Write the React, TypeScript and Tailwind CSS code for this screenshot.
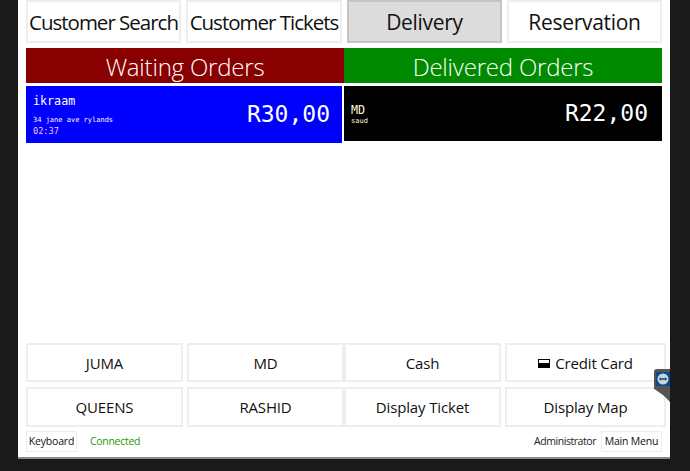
const font = "font-['Open_Sans','Noto_Sans',sans-serif]";

function Btn({ label, className = "" }: { label: React.ReactNode; className?: string }) {
  return (
    <div className={`flex items-center justify-center whitespace-nowrap border-2 border-[#eeeeee] bg-white text-[#111] ${className}`}>
      {label}
    </div>
  );
}

export default function App() {
  return (
    <div className={`h-[471px] w-[690px] overflow-hidden bg-[#1a1a1a] ${font}`}>
      <div className="relative flex h-[459px] w-[652px] ml-[18px] flex-col border-b-2 border-[#8a8a8a] bg-white px-2">
        {/* top tabs */}
        <div className="flex h-[43px] gap-[5px] text-[21px] tracking-[-0.3px]">
          <Btn label={<span className="text-[20.5px] tracking-[-1px]">Customer Search</span>} className="w-[155px] pt-[2px]" />
          <Btn label={<span className="text-[20.5px] tracking-[-1px]">Customer Tickets</span>} className="w-[156px] pt-[2px]" />
          <Btn label="Delivery" className="w-[155px] pt-[2px] !border-[#c4c4c4] !bg-[#dcdcdc]" />
          <Btn label="Reservation" className="flex-1 pt-[2px]" />
        </div>

        {/* headers */}
        <div className="mt-[5px] flex h-[35px] text-[24px] font-light tracking-[-0.2px] text-white">
          <div className="flex w-[318px] items-center justify-center bg-[#880000] pt-[2px]">Waiting Orders</div>
          <div className="flex flex-1 items-center justify-center bg-[#008a00] pt-[2px]">Delivered Orders</div>
        </div>

        {/* order cards */}
        <div className="mt-[3px] flex flex-1 items-start gap-[2px] font-['DejaVu_Sans_Mono',monospace] text-white">
          <div className="flex h-[57px] w-[316px] items-center justify-between bg-[#0000ff] pl-[7px] pr-[12px]">
            <div className="flex flex-col">
              <span className="text-[11.7px] leading-[14px]">ikraam</span>
              <span className="mt-[7px] text-[7px] leading-[10px]">34 jane ave rylands</span>
              <span className="mt-[1px] text-[8.6px] leading-[10px] text-[#ffc0e0]">02:37</span>
            </div>
            <span className="text-[23px] leading-none">R30,00</span>
          </div>
          <div className="flex h-[55px] flex-1 items-center justify-between bg-black pl-[7px] pr-[14px]">
            <div className="flex flex-col pt-[3px]">
              <span className="text-[11.7px] leading-[12px] text-[#fff8d8]">MD</span>
              <span className="text-[7px] leading-[10px] text-[#fff8d8]">saud</span>
            </div>
            <span className="text-[23px] leading-none">R22,00</span>
          </div>
        </div>

        {/* bottom buttons */}
        <div className="grid h-[84px] grid-cols-[157px_157px_157px_157px] grid-rows-[39px_40px] gap-x-[4px] gap-y-[5px] text-[15px] tracking-[-0.15px]">
          <Btn label="JUMA" className="pt-[1px]" />
          <Btn label="MD" className="pt-[1px]" />
          <Btn label="Cash" className="-ml-[4px] w-[157px] pt-[1px]" />
          <Btn
            className="-ml-[4px] pt-[1px]"
            label={
              <span className="flex items-center gap-[5px]">
                <span className="flex h-[9px] w-[12px] flex-col border border-black">
                  <span className="h-[3px] bg-white" />
                  <span className="flex-1 bg-black" />
                </span>
                Credit Card
              </span>
            }
          />
          <Btn label="QUEENS" />
          <Btn label="RASHID" />
          <Btn label="Display Ticket" className="-ml-[4px] w-[157px]" />
          <Btn label="Display Map" className="-ml-[4px]" />
        </div>

        {/* footer */}
        <div className="mb-[5px] mt-[4px] flex h-[21px] items-center text-[10.5px] tracking-[-0.2px]">
          <Btn label="Keyboard" className="h-full w-[51px] !border pt-[1px]" />
          <span className="ml-[13px] pt-[1px] tracking-[-0.3px] text-[#1a9a00]">Connected</span>
          <span className="ml-auto pt-[1px] tracking-[-0.45px] text-[#222]">Administrator</span>
          <Btn label="Main Menu" className="ml-[5px] h-full w-[61px] !border pt-[1px]" />
        </div>

        {/* remote-control tab */}
        <div className="absolute right-0 top-[369px] h-[33px] w-[16px] rounded-tl-[3px] bg-[#555] [clip-path:polygon(0_0,100%_0,100%_100%,60%_80%,0_60%)]">
          <div className="ml-[2px] mt-[3px] flex h-[14px] w-[14px] items-center justify-center bg-[#0e4a8a]">
            <svg viewBox="0 0 12 12" className="h-[12px] w-[12px]">
              <circle cx="6" cy="6" r="5.5" fill="#c9d3de" />
              <path d="M1.8 6 4 4.2V5.3H8V4.2L10.2 6 8 7.8V6.7H4V7.8Z" fill="#0e4a8a" />
            </svg>
          </div>
        </div>
      </div>
    </div>
  );
}
